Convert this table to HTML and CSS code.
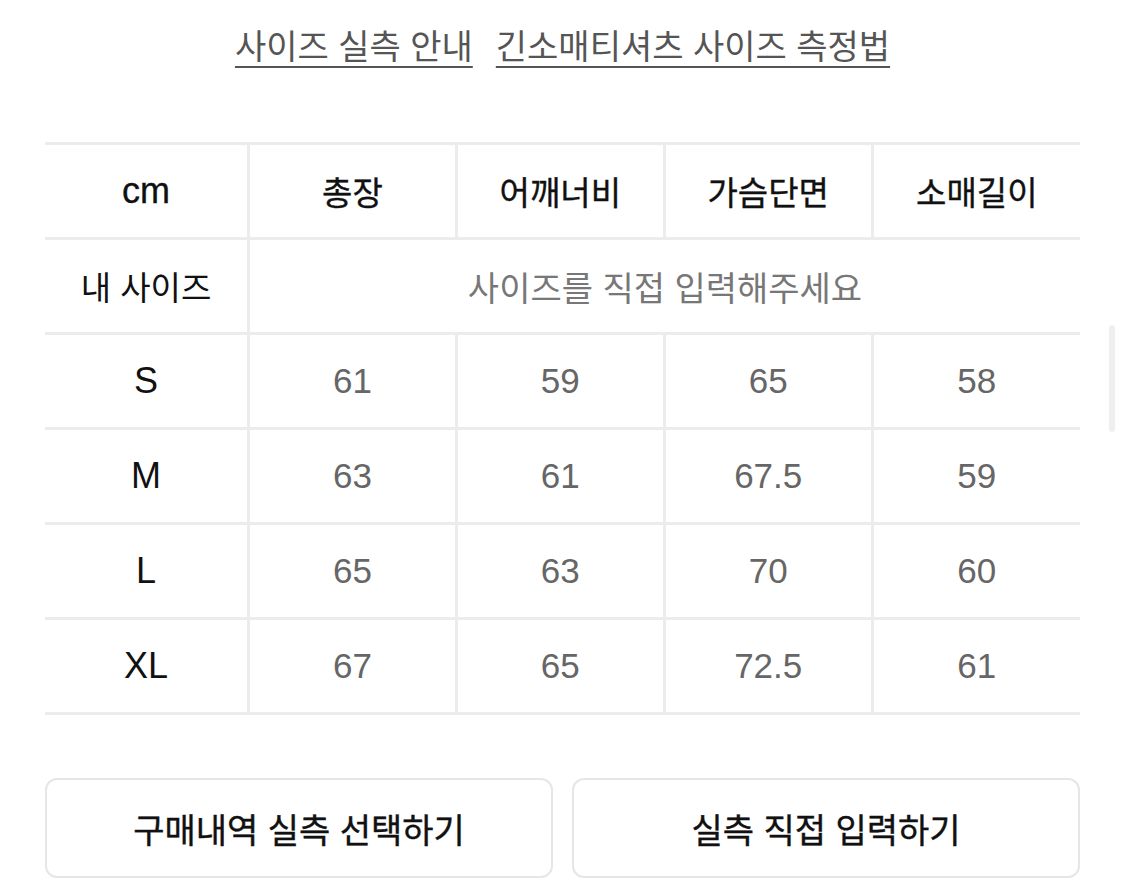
FILE: index.html
```html
<!DOCTYPE html>
<html lang="ko">
<head>
<meta charset="utf-8">
<link rel="stylesheet" href="styles.css">
</head>
<body>
<div class="page">
  <nav class="links">
    <a class="link" href="#">사이즈 실측 안내</a>
    <a class="link" href="#">긴소매티셔츠 사이즈 측정법</a>
  </nav>
  <table class="size-table">
    <tr class="head">
      <td class="label latin">cm</td>
      <td>총장</td>
      <td>어깨너비</td>
      <td>가슴단면</td>
      <td>소매길이</td>
    </tr>
    <tr>
      <td class="label">내 사이즈</td>
      <td class="placeholder" colspan="4">사이즈를 직접 입력해주세요</td>
    </tr>
    <tr>
      <td class="label latin">S</td><td class="val">61</td><td class="val">59</td><td class="val">65</td><td class="val">58</td>
    </tr>
    <tr>
      <td class="label latin">M</td><td class="val">63</td><td class="val">61</td><td class="val">67.5</td><td class="val">59</td>
    </tr>
    <tr>
      <td class="label latin">L</td><td class="val">65</td><td class="val">63</td><td class="val">70</td><td class="val">60</td>
    </tr>
    <tr>
      <td class="label latin">XL</td><td class="val">67</td><td class="val">65</td><td class="val">72.5</td><td class="val">61</td>
    </tr>
  </table>
  <div class="actions">
    <button class="btn">구매내역 실측 선택하기</button>
    <button class="btn">실측 직접 입력하기</button>
  </div>
</div>
<div class="scrollbar"></div>
</body>
</html>
```
FILE: styles.css
```css
html, body {
  margin: 0;
  padding: 0;
  background: #fff;
}
body {
  font-family: "Liberation Sans", "Noto Sans CJK KR", sans-serif;
  color: #111;
}
.page {
  padding: 0 45px;
}
.links {
  display: flex;
  justify-content: center;
  gap: 23px;
  padding-top: 24px;
  height: 116px;
  box-sizing: border-box;
}
.link {
  font-size: 34px;
  line-height: 46px;
  color: #555;
  text-decoration: underline;
  text-decoration-thickness: 2px;
  text-underline-offset: 7px;
  text-decoration-color: #555;
}
.size-table {
  width: 1035px;
  border-collapse: collapse;
  table-layout: fixed;
  margin-top: 26px;
}
.size-table td {
  border: 3px solid #ececec;
  height: 92px;
  padding: 0;
  text-align: center;
  vertical-align: middle;
  font-size: 33px;
  color: #111;
}
.size-table tr td:first-child {
  border-left: none;
  width: 202px;
}
.size-table tr td:last-child {
  border-right: none;
}
.size-table .head td {
  -webkit-text-stroke: 0.35px #111;
}
.size-table .latin {
  font-size: 36px;
}
.size-table .val {
  font-size: 35px;
  color: #666;
}
.size-table .placeholder {
  color: #777;
  font-size: 34px;
}
.actions {
  display: flex;
  gap: 19px;
  margin-top: 63px;
}
.btn {
  flex: 1;
  height: 100px;
  border: 2px solid #e6e6e6;
  border-radius: 12px;
  background: #fff;
  font-family: "Liberation Sans", "Noto Sans CJK KR", sans-serif;
  font-size: 34px;
  color: #111;
  -webkit-text-stroke: 0.4px #111;
}
.scrollbar {
  position: absolute;
  left: 1109px;
  top: 325px;
  width: 6px;
  height: 107px;
  border-radius: 3px;
  background: #efefef;
}
```
